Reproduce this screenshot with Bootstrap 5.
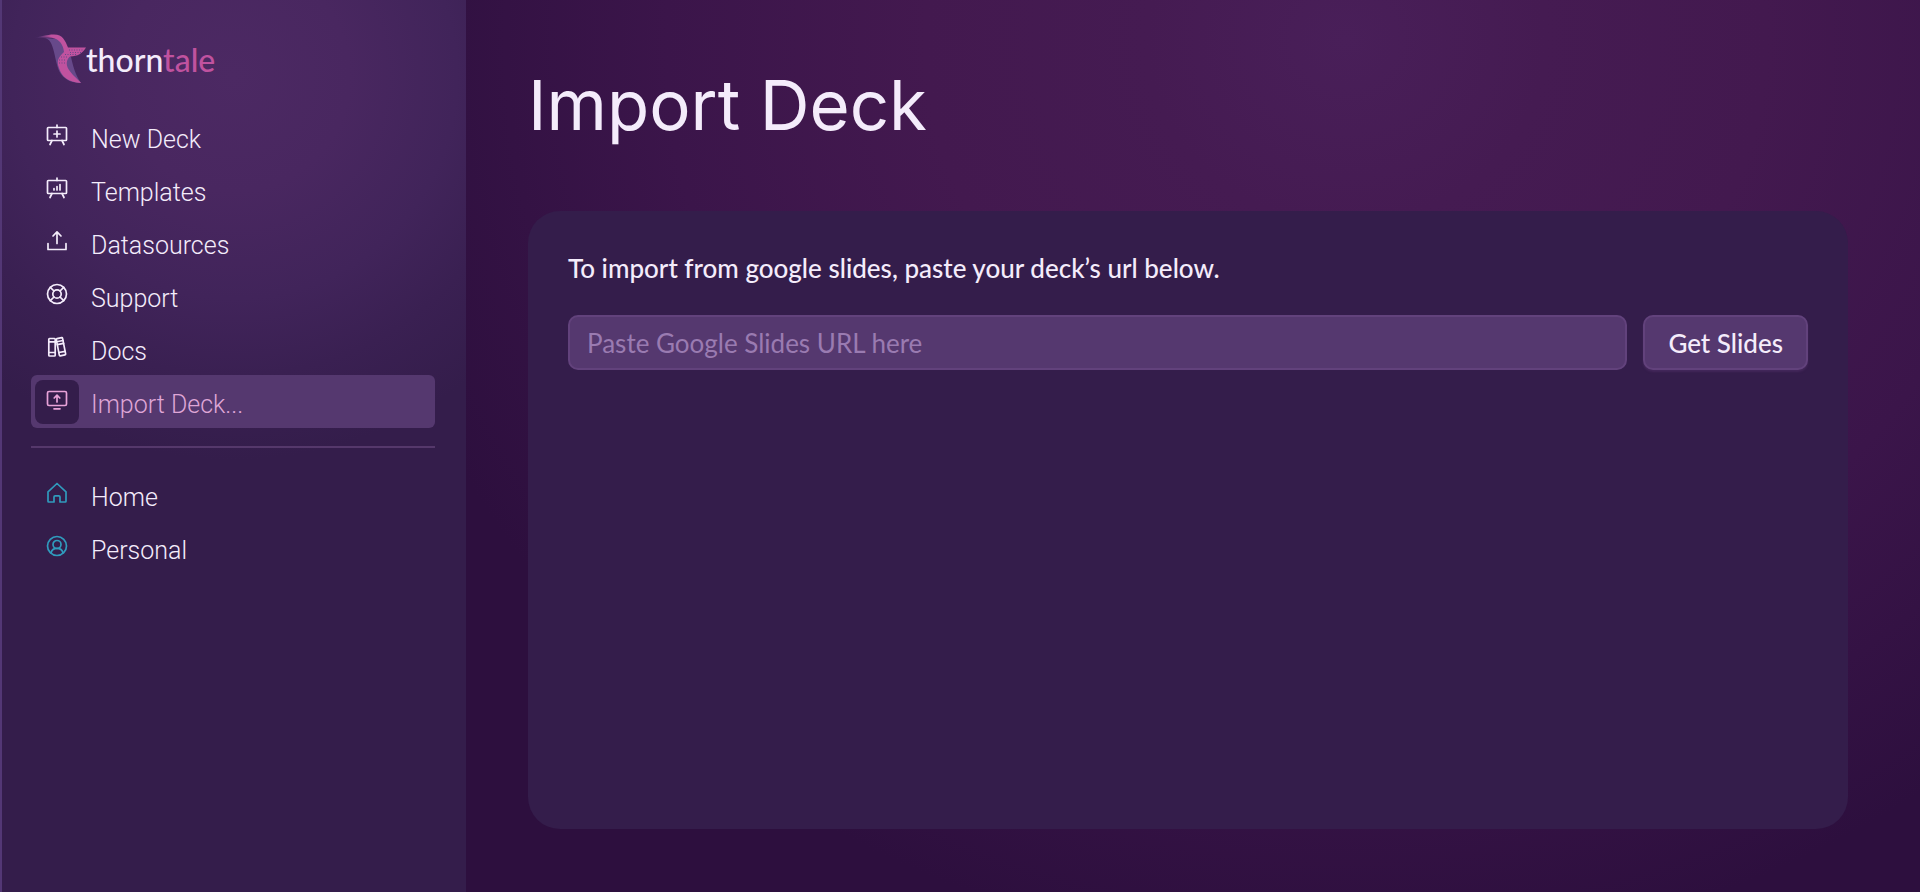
<!DOCTYPE html>
<html lang="en">
<head>
<meta charset="utf-8">
<meta name="viewport" content="width=device-width, initial-scale=1">
<title>Import Deck - thorntale</title>
<link href="https://cdn.jsdelivr.net/npm/bootstrap@5.3.0/dist/css/bootstrap.min.css" rel="stylesheet">
<style>
:root { --tt-base: #341d4b; --tt-raised: #55386f; --tt-text: #f4ecfb; --tt-pink: #c0529f; --tt-teal: #309bbd; }
body { background: var(--tt-base); color: var(--tt-text); font-family: Lato, "Liberation Sans", sans-serif; font-size: 26px; }
.side { width: 466px; padding: 30px 31px 32px 29px; border-left: 2px solid #533775;
  background: radial-gradient(circle 384px at 232px 76px, #4c2963 0%, #492760 30%, #41245a 58%, #3a2052 78%, #341d4b 100%) var(--tt-base); }
.brand { font-size: 32px; font-weight: 500; line-height: 56px; color: var(--tt-text); }
.brand span { color: var(--tt-pink); }
.brand svg { margin-left: 4px; }
.brand-name { height: 56px; padding-top: 2px; }
.menu-link { height: 53px; padding-left: 4px; gap: 12px; border-radius: 6px; color: var(--tt-text); font: 300 25px/30px Roboto, "Liberation Sans", sans-serif; text-decoration: none; }
.menu-link:hover { color: #fff; }
.menu-icon { width: 44px; height: 44px; padding-bottom: 4px; border-radius: 8px; }
.menu-icon svg { width: 24px; height: 24px; fill: none; stroke: currentColor; stroke-width: 1.7; stroke-linejoin: round; stroke-linecap: round; }
.menu-text { padding-top: 6px; }
.menu-link.active { background: var(--tt-raised); color: #dfa6d6; }
.menu-link.active .menu-icon { background: var(--tt-base); color: #e7a2d8; }
.places .menu-icon { color: var(--tt-teal); }
.rule { margin: 18px 0 20px; border-top: 2px solid #55386b; opacity: 1; }
.stage { padding: 65px 72px 63px 62px;
  background: radial-gradient(ellipse 1000px 920px at 880px 40px, #491f59 0%, #451b52 20%, #43194f 42%, #3b154a 68%, #2d0f3e 100%); }
.title { margin: 0 0 66px; font: 400 69px/80px Inter, "Liberation Sans", sans-serif; }
.panel { padding: 37px 40px; border-radius: 32px; background: var(--tt-base); }
.hint { margin-bottom: 27px; font-weight: 500; line-height: 40px; }
.field, .action { height: 55px; border: 2px solid #62427c; border-radius: 10px; background: var(--tt-raised); color: var(--tt-text); font-size: 26px; line-height: 32px; }
.field { padding: 2px 17px; }
.field:focus { background: var(--tt-raised); color: var(--tt-text); border-color: #8a62a8; box-shadow: none; }
.field::placeholder { color: #9a7bb1; opacity: 1; }
.action { padding: 2px 23px; font-weight: 500; box-shadow: 0 2px 2px #43275a; }
.action:hover { background: #63437f; color: #fff; border-color: #7a559a; }
</style>
</head>
<body>
<div class="d-flex min-vh-100">
  <aside class="side flex-shrink-0">
    <a class="brand d-flex align-items-center text-decoration-none" href="#">
      <svg width="51" height="52" viewBox="36 32 51 52" aria-hidden="true">
        <defs><linearGradient id="beak" x1="37" x2="52" y1="0" y2="0" gradientUnits="userSpaceOnUse"><stop offset="0" stop-color="#5f4387" stop-opacity=".3"/><stop offset="1" stop-color="#c0529f"/></linearGradient></defs>
        <path fill="#67498a" d="M44 38C51 38 53 44 55 52C57 60 58 68 62 74C67 81 75 83 82 83C76 74 74 66 72 57L66 47L60 39Z"/>
        <path fill="url(#beak)" d="M36 37.500C42 37 47 34.600 55 34.600C64 34.600 66 41 69 47.400L87 47.500C83 54 79 56 71 56.500C68 59 66 64 70 70C74 76 79 79 82 83C69 82 63 77 60 68C57 60 60 57 65 52C64 44 60 39 53 37.800C46 37 42 37.800 36 37.500Z"/>
        <path fill="none" stroke="#67498a" stroke-width="1" stroke-dasharray="1 1.500" d="M70 50L84 50M71 52.500L82 52.500M66 54.500L77 54.500M62 57L69 57M60 60L67 60M60 63L67 63"/>
      </svg>
      <div class="brand-name">thorn<span>tale</span></div>
    </a>
    <nav class="pt-4" aria-label="Main">
      <a class="menu-link d-flex align-items-center" href="#">
        <span class="menu-icon d-flex align-items-center justify-content-center"><svg viewBox="0 0 24 24"><rect x="2.500" y="4.500" width="19" height="13" rx=".8"/><path d="M12 4.500V2M7 17.500l-2 4M17 17.500l2 4M12 8v6M9 11h6"/></svg></span>
        <span class="menu-text">New Deck</span></a>
      <a class="menu-link d-flex align-items-center" href="#">
        <span class="menu-icon d-flex align-items-center justify-content-center"><svg viewBox="0 0 24 24"><rect x="2.500" y="4.500" width="19" height="13" rx=".8"/><path d="M12 4.500V2M7 17.500l-2 4M17 17.500l2 4M9 12.500v1.500M12 10.500v3.500M15 8.500v5.500"/></svg></span>
        <span class="menu-text">Templates</span></a>
      <a class="menu-link d-flex align-items-center" href="#">
        <span class="menu-icon d-flex align-items-center justify-content-center"><svg viewBox="0 0 24 24"><path d="M3 14.500v6h18v-6M12 14.500V3M8 7l4-4.200L16 7"/></svg></span>
        <span class="menu-text">Datasources</span></a>
      <a class="menu-link d-flex align-items-center" href="#">
        <span class="menu-icon d-flex align-items-center justify-content-center"><svg viewBox="0 0 24 24"><circle cx="12" cy="12" r="9.500"/><circle cx="12" cy="12" r="4.200"/><path d="M5.300 5.300l3.700 3.700M18.700 5.300l-3.700 3.700M5.300 18.700l3.700-3.700M18.700 18.700l-3.700-3.700"/></svg></span>
        <span class="menu-text">Support</span></a>
      <a class="menu-link d-flex align-items-center" href="#">
        <span class="menu-icon d-flex align-items-center justify-content-center"><svg viewBox="0 0 24 24"><rect x="3.800" y="3.500" width="6.400" height="17.500" rx=".8"/><path d="M3.800 6.800h6.400M3.800 17.500h6.400"/><g transform="rotate(-11 16 12)"><rect x="12.800" y="3" width="6.400" height="17.500" rx=".8"/><path d="M12.800 6h6.400M12.800 9h6.400M12.800 17h6.400"/></g></svg></span>
        <span class="menu-text">Docs</span></a>
      <a class="menu-link active d-flex align-items-center" href="#" aria-current="page">
        <span class="menu-icon d-flex align-items-center justify-content-center"><svg viewBox="0 0 24 24"><rect x="2.500" y="3.500" width="19" height="14" rx="1.500"/><path d="M9 20.800h6M12 14V7.500M9.200 10L12 7.200L14.800 10"/></svg></span>
        <span class="menu-text">Import Deck...</span></a>
    </nav>
    <hr class="rule">
    <nav class="places" aria-label="Places">
      <a class="menu-link d-flex align-items-center" href="#">
        <span class="menu-icon d-flex align-items-center justify-content-center"><svg viewBox="0 0 24 24"><path d="M3 10.800L12 2.500l9 8.300v9.500c0 .4-.3.700-.7.700H15v-5c0-.8-.4-1.200-1.200-1.200h-3.600C9.400 14.800 9 15.200 9 16v5H3.700c-.4 0-.7-.3-.7-.7Z"/></svg></span>
        <span class="menu-text">Home</span></a>
      <a class="menu-link d-flex align-items-center" href="#">
        <span class="menu-icon d-flex align-items-center justify-content-center"><svg viewBox="0 0 24 24"><circle cx="12" cy="12" r="9.500"/><circle cx="12" cy="10.500" r="4"/><path d="M6 19c.6-3 2.400-4.700 6-4.700s5.400 1.700 6 4.700"/></svg></span>
        <span class="menu-text">Personal</span></a>
    </nav>
  </aside>
  <main class="stage flex-grow-1 d-flex flex-column">
    <h1 class="title">Import Deck</h1>
    <section class="panel flex-grow-1">
      <label class="hint d-block" for="deck-url">To import from google slides, paste your deck’s url below.</label>
      <form class="d-flex gap-3">
        <input class="field form-control" type="url" id="deck-url" placeholder="Paste Google Slides URL here">
        <button class="action btn flex-shrink-0" type="button">Get Slides</button>
      </form>
    </section>
  </main>
</div>
<script src="https://cdn.jsdelivr.net/npm/bootstrap@5.3.0/dist/js/bootstrap.bundle.min.js"></script>
</body>
</html>
